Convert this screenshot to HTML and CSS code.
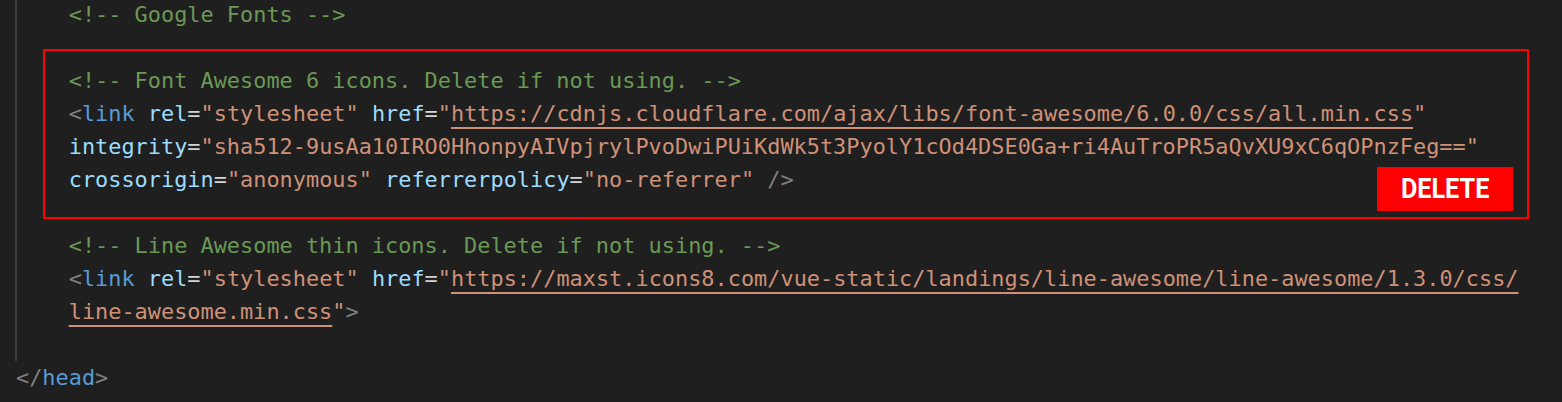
FILE: index.html
```html
<!DOCTYPE html>
<html lang="en">
<head>
<meta charset="utf-8">
<title>Editor</title>
<link rel="stylesheet" href="styles.css">
</head>
<body>
<div class="editor">
  <div class="children">
    <div class="line"><span class="c">&lt;!-- Google Fonts --&gt;</span></div>
    <div class="line"> </div>
    <div class="group">
      <div class="line"><span class="c">&lt;!-- Font Awesome 6 icons. Delete if not using. --&gt;</span></div>
      <div class="line"><span class="p">&lt;</span><span class="t">link</span> <span class="a">rel</span><span class="e">=</span><span class="s">"stylesheet"</span> <span class="a">href</span><span class="e">=</span><span class="s">"<span class="u">https://cdnjs.cloudflare.com/ajax/libs/font-awesome/6.0.0/css/all.min.css</span>"</span></div>
      <div class="line"><span class="a">integrity</span><span class="e">=</span><span class="s">"sha512-9usAa10IRO0HhonpyAIVpjrylPvoDwiPUiKdWk5t3PyolY1cOd4DSE0Ga+ri4AuTroPR5aQvXU9xC6qOPnzFeg=="</span></div>
      <div class="line"><span class="a">crossorigin</span><span class="e">=</span><span class="s">"anonymous"</span> <span class="a">referrerpolicy</span><span class="e">=</span><span class="s">"no-referrer"</span> <span class="p">/&gt;</span></div>
      <div class="annot"><span class="badge"><span class="badge-text">DELETE</span></span></div>
    </div>
    <div class="line"> </div>
    <div class="line"><span class="c">&lt;!-- Line Awesome thin icons. Delete if not using. --&gt;</span></div>
    <div class="line"><span class="p">&lt;</span><span class="t">link</span> <span class="a">rel</span><span class="e">=</span><span class="s">"stylesheet"</span> <span class="a">href</span><span class="e">=</span><span class="s">"<span class="u">https://maxst.icons8.com/vue-static/landings/line-awesome/line-awesome/1.3.0/css/</span></span></div>
    <div class="line"><span class="s"><span class="u">line-awesome.min.css</span>"</span><span class="p">&gt;</span></div>
    <div class="line"> </div>
  </div>
  <div class="line"><span class="p">&lt;/</span><span class="t">head</span><span class="p">&gt;</span></div>
</div>
</body>
</html>
```

FILE: styles.css
```css
html, body {
  margin: 0;
  padding: 0;
  background: #1f1f1f;
  overflow: hidden;
}

.editor {
  margin-top: -2.5px;
  padding-left: 16px;
  font-family: "DejaVu Sans Mono", monospace;
  font-size: 21.9px;
  line-height: 33px;
  color: #d4d4d4;
}

.children {
  margin-left: -1px;
  border-left: 2px solid #3e3e3e;
  padding-left: calc(4ch - 1px);
}

.line {
  height: 33px;
  white-space: pre;
}

.group {
  position: relative;
}

.annot {
  position: absolute;
  left: -25.7px;
  top: -14.4px;
  right: 33px;
  bottom: -23.6px;
  border: 2px solid #ff0000;
}

.badge {
  position: absolute;
  right: 14px;
  bottom: 6px;
  width: 136px;
  height: 44px;
  background: #ff0000;
  display: flex;
  align-items: center;
  justify-content: center;
}

.badge-text {
  display: inline-block;
  font-family: Roboto, "Liberation Sans", sans-serif;
  font-weight: 700;
  font-size: 28px;
  line-height: 1;
  color: #ffffff;
  transform: scaleX(0.9);
}

.c { color: #6a9955; }
.p { color: #808080; }
.t { color: #569cd6; }
.a { color: #9cdcfe; }
.e { color: #d4d4d4; }
.s { color: #ce9178; }

.u {
  text-decoration: underline;
  text-decoration-color: #ce9178;
  text-decoration-thickness: 2px;
  text-underline-offset: 6px;
}
```
